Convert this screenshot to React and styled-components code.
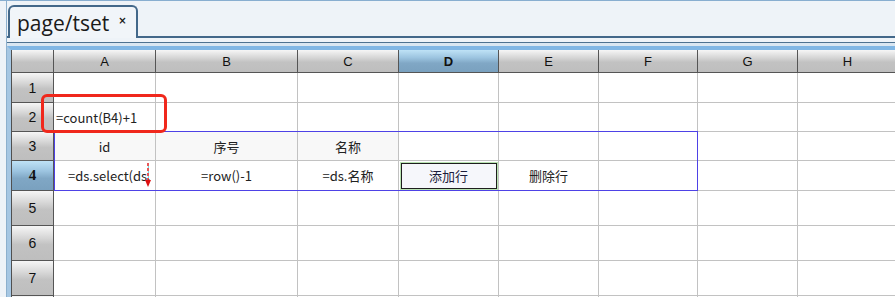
import React from 'react';
import styled, { createGlobalStyle, css } from 'styled-components';

const Global = createGlobalStyle`
  html, body { margin: 0; padding: 0; background: #eef3f8; }
  * { box-sizing: border-box; }
`;

const colWidths = [42, 102, 142, 101, 100, 100, 99, 100, 100];
const rowHeights = [23, 30, 29, 29, 30, 35, 35, 35, 35];
const letters = ['A', 'B', 'C', 'D', 'E', 'F', 'G', 'H'];

// cell content per row (index = column A..H)
const rows = {
  2: [{ text: '=count(B4)+1', align: 'left', pad: 2, overflow: true }],
  3: [
    { text: 'id', shade: true },
    { text: '序号', shade: true },
    { text: '名称', shade: true },
  ],
  4: [
    { text: '=ds.select(ds.', align: 'left', pad: 14, arrow: true },
    { text: '=row()-1' },
    { text: '=ds.名称' },
    { text: '添加行', button: true },
    { text: '删除行' },
  ],
};

const Page = styled.div`
  height: 297px;
  overflow: hidden;
  border-top: 1px solid #88aed0;
`;

const Shell = styled.div`
  margin-left: 6px;
  height: 100%;
  border-left: 1px solid #8db0cd;
`;

const TabStrip = styled.div`
  height: 35px;
  padding-left: 1px;
  display: flex;
  align-items: flex-end;
`;

const Tab = styled.div`
  position: relative;
  z-index: 1;
  height: 33px;
  margin-bottom: -2px;
  padding: 0 9px 0 7px;
  display: flex;
  align-items: center;
  background: #f1f5f9;
  border: 2px solid #43688a;
  border-bottom: none;
  border-radius: 6px 6px 0 0;
  font-family: "Open Sans", "Noto Sans", sans-serif;
  font-size: 21px;
  color: #1a1a1a;
`;

const Close = styled.span`
  margin-left: 9px;
  margin-top: -5px;
  font-family: "DejaVu Sans", sans-serif;
  font-size: 10px;
  font-weight: bold;
`;

const Panel = styled.div`
  border-top: 2px solid #43688a;
  padding-top: 4px;
`;

const Frame = styled.div`
  border-top: 1px solid #4d7190;
  background: #d9e6f1;
  padding-top: 3px;
`;

const Band = styled.div`
  border-top: 4px solid #80b6e4;
  border-left: 4px solid #a6c7e3;
  background: #eef3f8;
`;

const Sheet = styled.div`
  position: relative;
  display: grid;
  grid-template-columns: ${colWidths.map((w) => w + 'px').join(' ')};
  grid-template-rows: ${rowHeights.map((h) => h + 'px').join(' ')};
  border-left: 1px solid #505050;
  background: #fff;
  font-family: "Noto Sans CJK SC", "Noto Sans", sans-serif;
  font-size: 13px;
  color: #222;
`;

const headBase = css`
  display: flex;
  align-items: center;
  justify-content: center;
  border-right: 1px solid #555;
  border-bottom: 1px solid #555;
  font-family: "Liberation Sans", Arial, sans-serif;
  font-size: 13px;
  color: #111;
  background: linear-gradient(#f6f6f6 0%, #d6d6d6 35%, #c2c2c2 55%, #bebebe 100%);
`;

const activeHead = css`
  font-weight: bold;
  background: linear-gradient(#bfe2f6 0%, #9cc4e0 35%, #80a7c5 60%, #7aa1bf 100%);
`;

const Corner = styled.div`
  ${headBase}
`;

const ColHead = styled.div`
  ${headBase}
  ${(p) => p.$active && activeHead}
`;

const RowHead = styled.div`
  ${headBase}
  font-size: 14px;
  ${(p) => p.$active && activeHead}
  ${(p) => p.$active && css`font-family: "Liberation Serif", serif; font-size: 15px;`}
`;

const Cell = styled.div`
  position: relative;
  display: flex;
  align-items: center;
  justify-content: ${(p) => (p.$align === 'left' ? 'flex-start' : 'center')};
  padding-left: ${(p) => p.$pad || 0}px;
  border-right: 1px solid #c2c2c2;
  border-bottom: 1px solid #c2c2c2;
  background: ${(p) => (p.$shade ? '#f8f8f8' : '#fff')};
  white-space: nowrap;
  overflow: ${(p) => (p.$overflow ? 'visible' : 'hidden')};
  z-index: ${(p) => (p.$overflow ? 1 : 0)};
`;

const CellButton = styled.div`
  width: 98px;
  height: 28px;
  display: flex;
  align-items: center;
  justify-content: center;
  border: 1px solid #b9e4b2;
  box-shadow: inset 0 0 0 1px #1e1e1e;
  background: #f6f7fb;
  color: #1c1c3a;
`;

const Arrow = styled.svg`
  position: absolute;
  right: 3px;
  top: 2px;
`;

const Highlight = styled.div`
  position: absolute;
  left: 29px;
  top: 44px;
  width: 126px;
  height: 39px;
  border: 3px solid #f0281c;
  border-radius: 6px;
  pointer-events: none;
  z-index: 3;
`;

const Selection = styled.div`
  position: absolute;
  left: 42px;
  top: 81px;
  width: 644px;
  height: 60px;
  border: 1px solid #4e42e6;
  pointer-events: none;
  z-index: 2;
`;

const DownArrow = () => (
  <Arrow width="8" height="26" viewBox="0 0 8 26">
    <line x1="4" y1="0" x2="4" y2="20" stroke="#e01010" strokeWidth="1.4" strokeDasharray="3 2" />
    <line x1="4.4" y1="3" x2="4.4" y2="17" stroke="#3cc8d0" strokeWidth="0.8" strokeDasharray="2 3" />
    <path d="M1 17 L4 24 L7 17 Z" fill="#e01010" />
  </Arrow>
);

const App = () => {
  return (
    <Page>
      <Global />
      <Shell>
        <TabStrip>
          <Tab>
            page/tset<Close>×</Close>
          </Tab>
        </TabStrip>
        <Panel>
          <Frame>
            <Band>
              <Sheet>
                <Corner />
                {letters.map((l) => (
                  <ColHead key={l} $active={l === 'D'}>{l}</ColHead>
                ))}
                {[1, 2, 3, 4, 5, 6, 7, 8].map((r) => (
                  <React.Fragment key={r}>
                    <RowHead $active={r === 4}>{r}</RowHead>
                    {letters.map((l, i) => {
                      const c = (rows[r] || [])[i];
                      if (!c) return <Cell key={l} />;
                      return (
                        <Cell
                          key={l}
                          $align={c.align}
                          $pad={c.pad}
                          $shade={c.shade}
                          $overflow={c.overflow}
                        >
                          {c.button ? <CellButton>{c.text}</CellButton> : c.text}
                          {c.arrow && <DownArrow />}
                        </Cell>
                      );
                    })}
                  </React.Fragment>
                ))}
                <Selection />
                <Highlight />
              </Sheet>
            </Band>
          </Frame>
        </Panel>
      </Shell>
    </Page>
  );
};

export default App;
